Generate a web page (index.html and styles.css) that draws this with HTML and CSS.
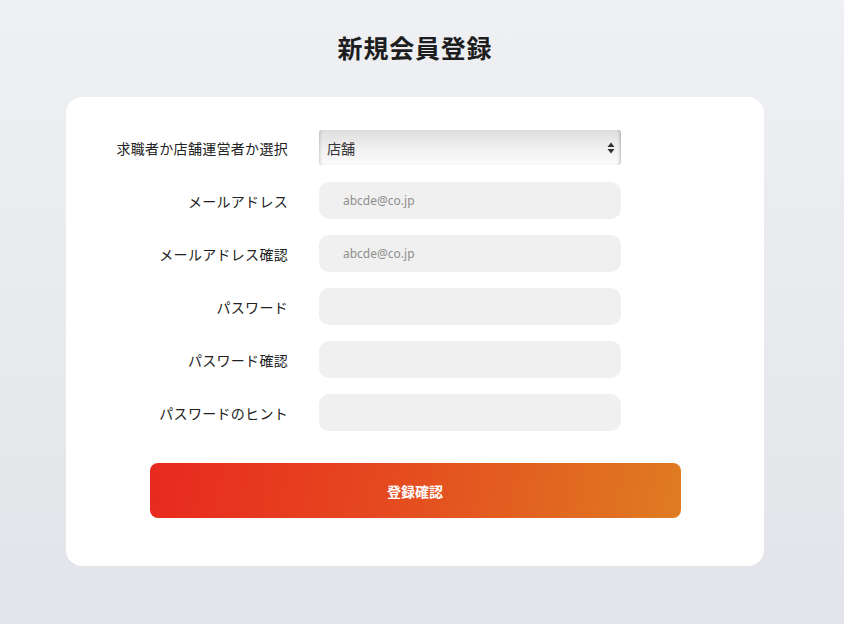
FILE: index.html
```html
<!DOCTYPE html>
<html lang="ja">
<head>
<meta charset="utf-8">
<title>新規会員登録</title>
<link rel="stylesheet" href="styles.css">
</head>
<body>
<div class="page">
  <h1 class="title">新規会員登録</h1>
  <form class="card">
    <div class="rows">
      <label class="label">求職者か店舗運営者か選択</label>
      <div class="select-wrap">
        <select class="select">
          <option>店舗</option>
          <option>求職者</option>
        </select>
        <svg class="arrows" width="8" height="12" viewBox="0 0 8 12"><path d="M4 0.5 L7.5 5 L0.5 5 Z M4 11.5 L7.5 7 L0.5 7 Z" fill="#333"/></svg>
      </div>

      <label class="label">メールアドレス</label>
      <input class="input" type="text" placeholder="abcde@co.jp">

      <label class="label">メールアドレス確認</label>
      <input class="input" type="text" placeholder="abcde@co.jp">

      <label class="label">パスワード</label>
      <input class="input" type="password">

      <label class="label">パスワード確認</label>
      <input class="input" type="password">

      <label class="label">パスワードのヒント</label>
      <input class="input" type="text">
    </div>
    <button class="submit" type="button">登録確認</button>
  </form>
</div>
</body>
</html>
```
FILE: styles.css
```css
html, body {
  margin: 0;
  padding: 0;
}
body {
  min-height: 624px;
  background: linear-gradient(180deg, #eef0f3 0%, #e3e4e9 100%);
  font-family: "Noto Sans CJK JP", "Noto Sans", sans-serif;
  color: #222;
}
.page {
  width: 830px;
  padding-top: 28px;
  box-sizing: border-box;
}
.title {
  margin: 0 0 31px;
  text-align: center;
  font-size: 25px;
  line-height: 38px;
  font-weight: 700;
  color: #1e1e1e;
  letter-spacing: 0.8px;
}
.card {
  margin: 0 0 0 66px;
  width: 698px;
  height: 469px;
  box-sizing: border-box;
  background: #fff;
  border-radius: 16px;
  padding-top: 33px;
  display: flex;
  flex-direction: column;
  align-items: center;
}
.rows {
  align-self: flex-start;
  display: grid;
  grid-template-columns: 222px 302px;
  column-gap: 31px;
  row-gap: 16px;
  align-items: center;
}
.label {
  text-align: right;
  font-size: 14px;
  line-height: 20px;
  color: #222;
  white-space: nowrap;
  letter-spacing: 0.3px;
}
.select-wrap {
  position: relative;
  height: 35px;
  margin-bottom: 1px;
}
.select {
  appearance: none;
  -webkit-appearance: none;
  width: 100%;
  height: 35px;
  border: none;
  border-radius: 3px;
  padding: 0 0 0 8px;
  font-family: inherit;
  font-size: 14px;
  color: #333;
  background: linear-gradient(180deg, #dedede 0%, #f1f1f1 55%, #fbfbfb 100%);
  box-shadow: inset 3px 0 3px -2px rgba(0,0,0,0.18), inset -3px 0 3px -2px rgba(0,0,0,0.25);
  outline: none;
}
.arrows {
  position: absolute;
  right: 6px;
  top: 12px;
  pointer-events: none;
}
.input {
  height: 37px;
  box-sizing: border-box;
  border: none;
  border-radius: 10px;
  background: #f0f0f0;
  padding: 0 0 0 24px;
  font-family: "Noto Sans", "Noto Sans CJK JP", sans-serif;
  font-size: 12px;
  color: #333;
  outline: none;
}
.input::placeholder {
  color: #8e8e8e;
}
.submit {
  margin-top: 32px;
  width: 531px;
  height: 55px;
  border: none;
  border-radius: 8px;
  background: linear-gradient(100deg, #e8291f 0%, #e54a1f 45%, #df7c22 100%);
  color: #fff;
  font-family: inherit;
  font-size: 14px;
  font-weight: 700;
  cursor: pointer;
}
```
